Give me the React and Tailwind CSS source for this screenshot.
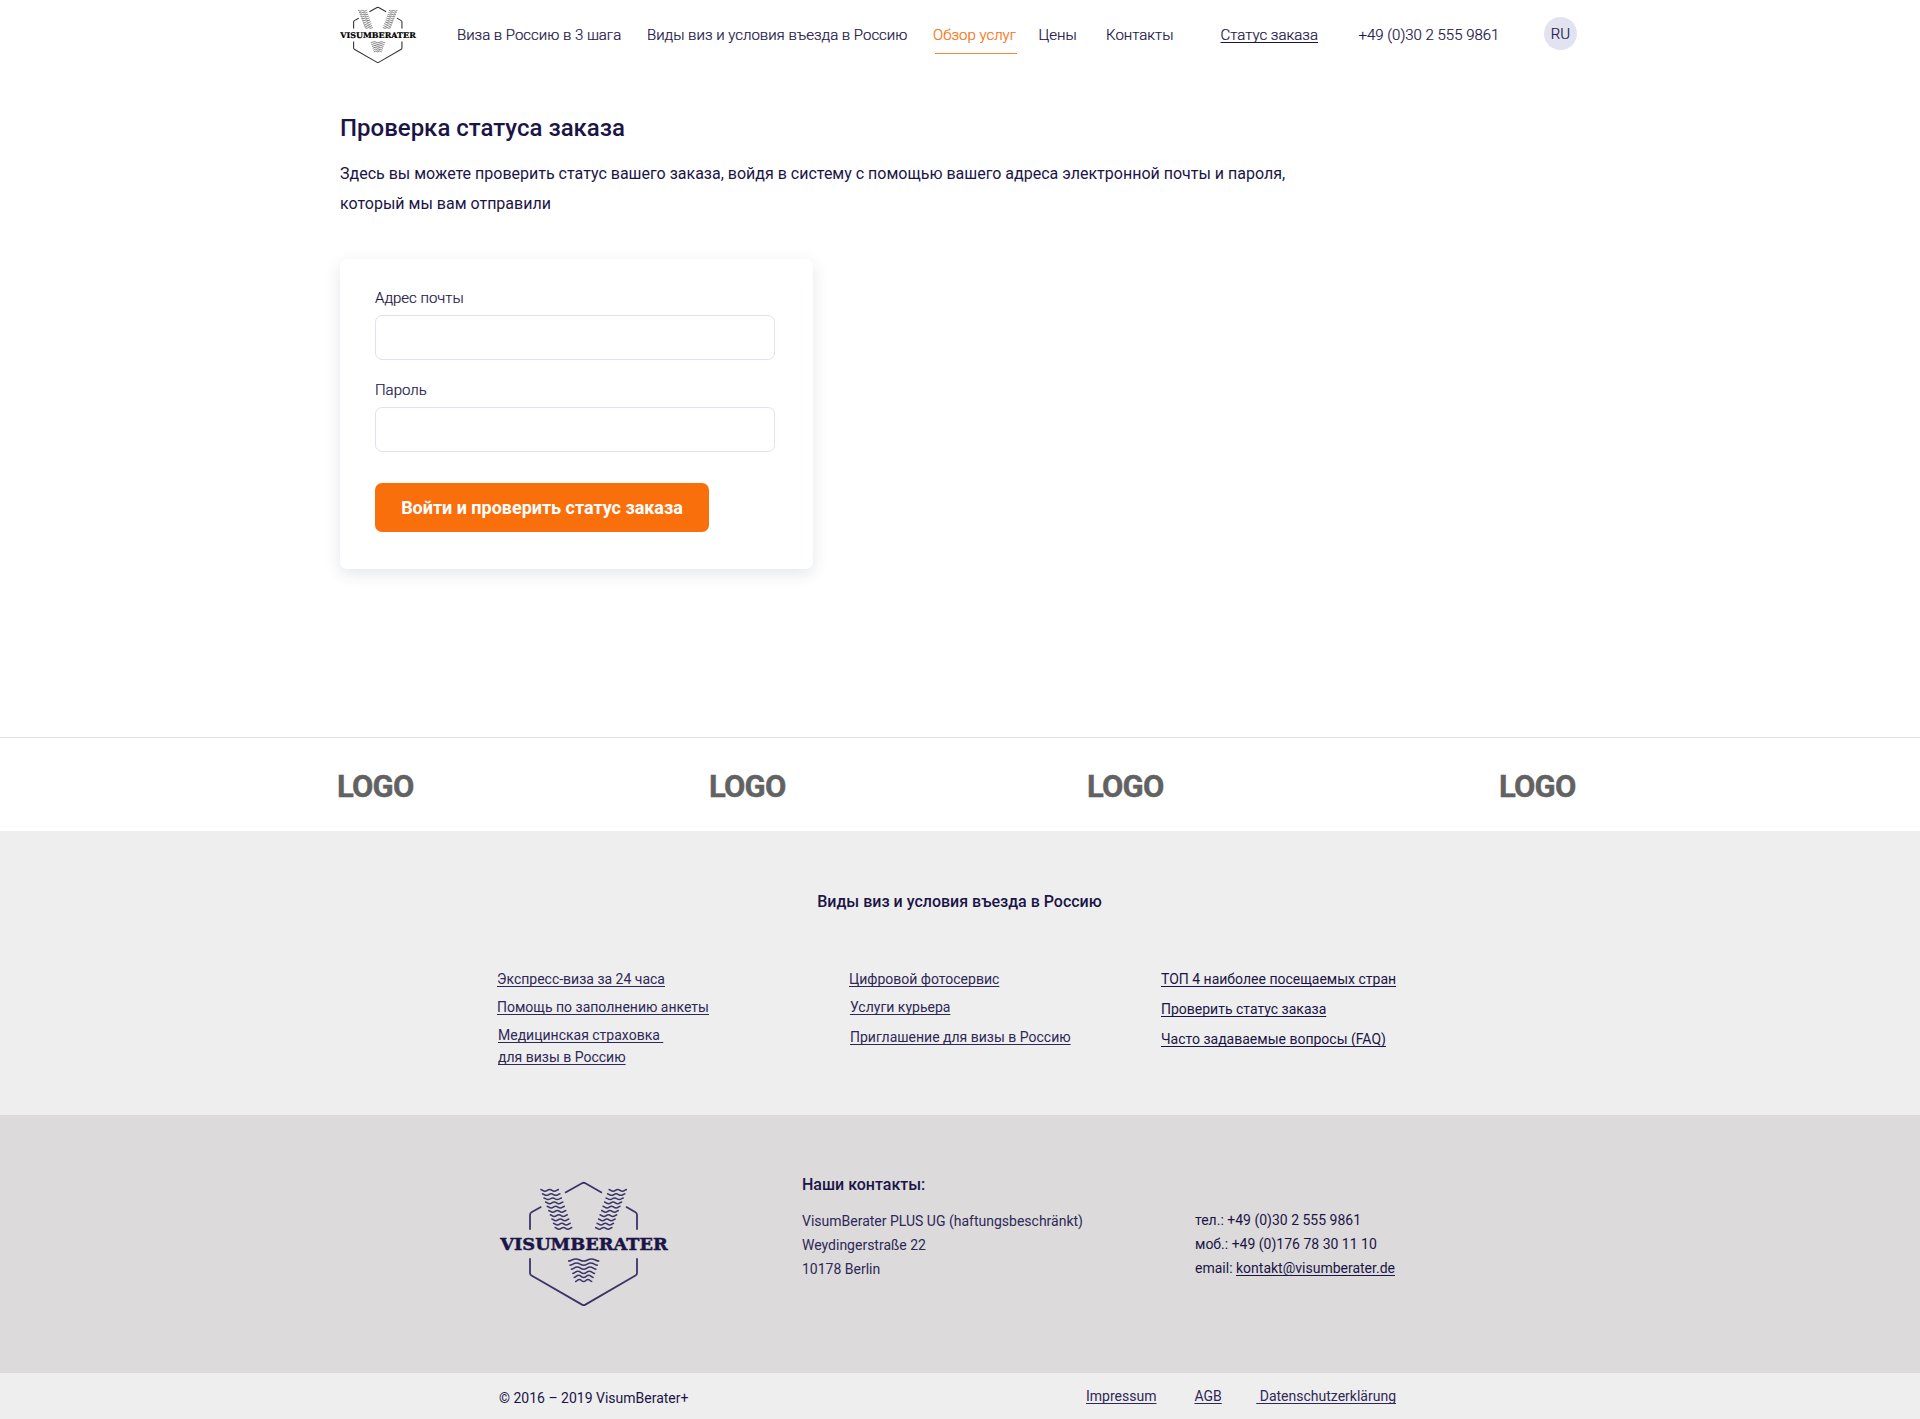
import React from "react";

function wave(x1, x2, y, amp) {
  const q = (x2 - x1) / 4;
  const h = q / 2;
  let d = `M${x1} ${y - amp}`;
  for (let i = 0; i < 4; i++) {
    const from = i % 2 === 0 ? y - amp : y + amp;
    const to = i % 2 === 0 ? y + amp : y - amp;
    const s = x1 + i * q;
    d += `C${s + h} ${from} ${s + h} ${to} ${s + q} ${to}`;
  }
  return d;
}

function rows(count, top, bottom, y0, y1, amp) {
  return Array.from({ length: count }, (_, i) => {
    const t = i / (count - 1);
    return wave(
      top[0] + (bottom[0] - top[0]) * t,
      top[1] + (bottom[1] - top[1]) * t,
      y0 + (y1 - y0) * t,
      amp
    );
  });
}

const waves = [
  ...rows(10, [40.3, 59], [54.5, 72.3], 8.3, 46.3, 0.85),
  ...rows(10, [108.5, 127], [95, 112.5], 8.3, 46.3, 0.85),
  ...rows(6, [68, 99.3], [75, 92.3], 78, 98.5, -1.1),
];

const frame = [
  "M65 10.7L82 1.2Q83.7 .3 85.4 1.2L102 10.7",
  "M41.3 24.7L31.5 30.2Q30 31 30 33V47.7",
  "M126 24.7L135.5 30.2Q137 31 137 33V47.7",
  "M30 76.3V91Q30 92.7 31.5 93.5L82 122.6Q83.7 123.5 85.4 122.6L135.5 93.5Q137 92.7 137 91V76.3",
];

function Logo({ className, stroke, fill, waveStroke, frameWidth, waveWidth }) {
  return (
    <svg viewBox="0 0 168 124" className={className} fill="none" overflow="visible">
      {frame.map((d) => (
        <path key={d} d={d} stroke={stroke} strokeWidth={frameWidth} />
      ))}
      {waves.map((d) => (
        <path key={d} d={d} stroke={waveStroke} strokeWidth={waveWidth} />
      ))}
      <text
        x="0.3"
        y="68.2"
        textLength="167.4"
        lengthAdjust="spacingAndGlyphs"
        fill={fill}
        stroke={fill}
        strokeWidth="0.5"
        fontFamily='"DejaVu Serif", serif'
        fontWeight="700"
        fontSize="17.4"
      >
        VISUMBERATER
      </text>
    </svg>
  );
}

const link =
  "block w-max whitespace-nowrap underline decoration-1 underline-offset-[2px] [text-decoration-skip-ink:none]";

function Header() {
  return (
    <header className="mx-auto flex h-[70px] w-[1240px] items-center text-[15px] leading-6 font-light whitespace-nowrap [-webkit-text-stroke:0.2px]">
      <Logo
        className="-mt-px h-[56px] w-[76px]"
        stroke="#333333"
        waveStroke="#666666"
        fill="#000000"
        frameWidth="2.4"
        waveWidth="1.9"
      />
      <nav className="ml-[41px] flex">
        <a className="w-[190px] tracking-[-0.02px]">Виза в Россию в 3 шага</a>
        <a className="w-[286px] tracking-[-0.01px]">Виды виз и условия въезда в Россию</a>
        <a className="relative w-[105.5px] text-[#f96f0c]">
          Обзор услуг
          <span className="absolute top-[30px] left-[2px] h-px w-[82px] bg-[#f9863a]" />
        </a>
        <a className="w-[67.5px]">Цены</a>
        <a className="w-[114.5px]">Контакты</a>
        <a className="w-[138px] underline decoration-1 underline-offset-[2px] [text-decoration-skip-ink:none]">
          Статус заказа
        </a>
        <span className="w-[185.5px]">+49 (0)30 2 555 9861</span>
      </nav>
      <button className="-mt-[3px] flex size-[33px] items-center justify-center rounded-full bg-[#e1e3f0]">
        RU
      </button>
    </header>
  );
}

function Field({ label, type }) {
  return (
    <label className="block h-[92px] text-[15px] leading-6 font-light [-webkit-text-stroke:0.2px]">
      {label}
      <input
        type={type}
        className="mt-[5px] block h-[45px] w-[400px] rounded-[7px] border border-[#e2e1f0] bg-white"
      />
    </label>
  );
}

const services = ["Экспресс-виза за 24 часа", "Помощь по заполнению анкеты"];

export default function App() {
  return (
    <div className="h-[1419px] w-[1920px] overflow-hidden bg-white font-['Roboto',sans-serif] text-[#1b1547]">
      <Header />

      <main className="mx-auto h-[667px] w-[1240px] pt-[42px]">
        <h1 className="text-2xl leading-8 font-medium">Проверка статуса заказа</h1>
        <p className="mt-[15px] w-[1000px] text-base leading-[30px]">
          Здесь вы можете проверить статус вашего заказа, войдя в систему с помощью вашего адреса
          электронной почты и пароля,
          <br />
          который мы вам отправили
        </p>
        <form className="mt-10 h-[310px] w-[473px] rounded-[7px] bg-white pt-[27px] pl-[35px] shadow-[0_5px_16px_rgba(30,50,80,0.12)]">
          <Field label="Адрес почты" type="email" />
          <Field label="Пароль" type="password" />
          <button
            type="button"
            className="mt-[13px] h-[49px] w-[334px] rounded-[7px] bg-[#f96f0c] text-lg font-bold tracking-[-0.02px] text-white"
          >
            Войти и проверить статус заказа
          </button>
        </form>
      </main>

      <section className="h-[94px] border-t border-[#e2e2e2]">
        <div className="mx-auto flex w-[1246px] pt-[29px] text-[31px] leading-[40px] font-bold tracking-[-0.8px] text-[#626262] [-webkit-text-stroke:0.4px]">
          <span className="w-[372px]">LOGO</span>
          <span className="w-[378px]">LOGO</span>
          <span className="w-[412px]">LOGO</span>
          <span>LOGO</span>
        </div>
      </section>

      <section className="h-[284px] bg-[#eeeeee] pt-[59px] text-sm">
        <h2 className="pr-px text-center text-base leading-6 font-medium">
          Виды виз и условия въезда в Россию
        </h2>
        <div className="ml-[497px] flex pt-[53px] leading-6">
          <div className="w-[352px] text-[#2e2857]">
            {services.map((text) => (
              <a key={text} className={link + " mb-1"}>
                {text}
              </a>
            ))}
            <div className="ml-px leading-[22px]">
              <a className={link + " pt-px"}>Медицинская страховка&nbsp;</a>
              <a className={link}>для визы в Россию</a>
            </div>
          </div>
          <div className="w-[312px] text-[#2e2857]">
            <a className={link}>Цифровой фотосервис</a>
            <a className={link + " mt-1 ml-px"}>Услуги курьера</a>
            <a className={link + " mt-1.5 ml-px"}>Приглашение для визы в Россию</a>
          </div>
          <div className="flex flex-col gap-1.5">
            <a className={link}>ТОП 4 наиболее посещаемых стран</a>
            <a className={link}>Проверить статус заказа</a>
            <a className={link}>Часто задаваемые вопросы (FAQ)</a>
          </div>
        </div>
      </section>

      <section className="flex h-[258px] bg-[#dcdadb] pl-[500px] text-sm leading-6 whitespace-nowrap">
        <Logo
          className="mt-[67px] h-[124px] w-[168px]"
          stroke="#3a3568"
          waveStroke="#3a3568"
          fill="#1b1547"
          frameWidth="1.8"
          waveWidth="1.5"
        />
        <div className="ml-[134px] w-[393px] pt-[58px]">
          <h3 className="text-base leading-6 font-medium">Наши контакты:</h3>
          <div className="mt-3 text-[#2e2857]">
            <p>VisumBerater PLUS UG (haftungsbeschränkt)</p>
            <p>Weydingerstraße 22</p>
            <p>10178 Berlin</p>
          </div>
        </div>
        <div className="pt-[93px]">
          <p>тел.: +49 (0)30 2 555 9861</p>
          <p>моб.: +49 (0)176 78 30 11 10</p>
          <p>
            email:{" "}
            <a className="underline decoration-1 underline-offset-[2px] [text-decoration-skip-ink:none]">
              kontakt@visumberater.de
            </a>
          </p>
        </div>
      </section>

      <footer className="flex h-[46px] bg-[#eeeeee] pt-[11px] pl-[499px] text-sm leading-6">
        <p className="mt-0.5 w-[587px]">© 2016 – 2019 VisumBerater+</p>
        <div className="flex text-[#2e2857]">
          <a className={link + " mr-[38px]"}>Impressum</a>
          <a className={link + " mr-[34.5px]"}>AGB</a>
          <a className={link}>&nbsp;Datenschutzerklärung</a>
        </div>
      </footer>
    </div>
  );
}
